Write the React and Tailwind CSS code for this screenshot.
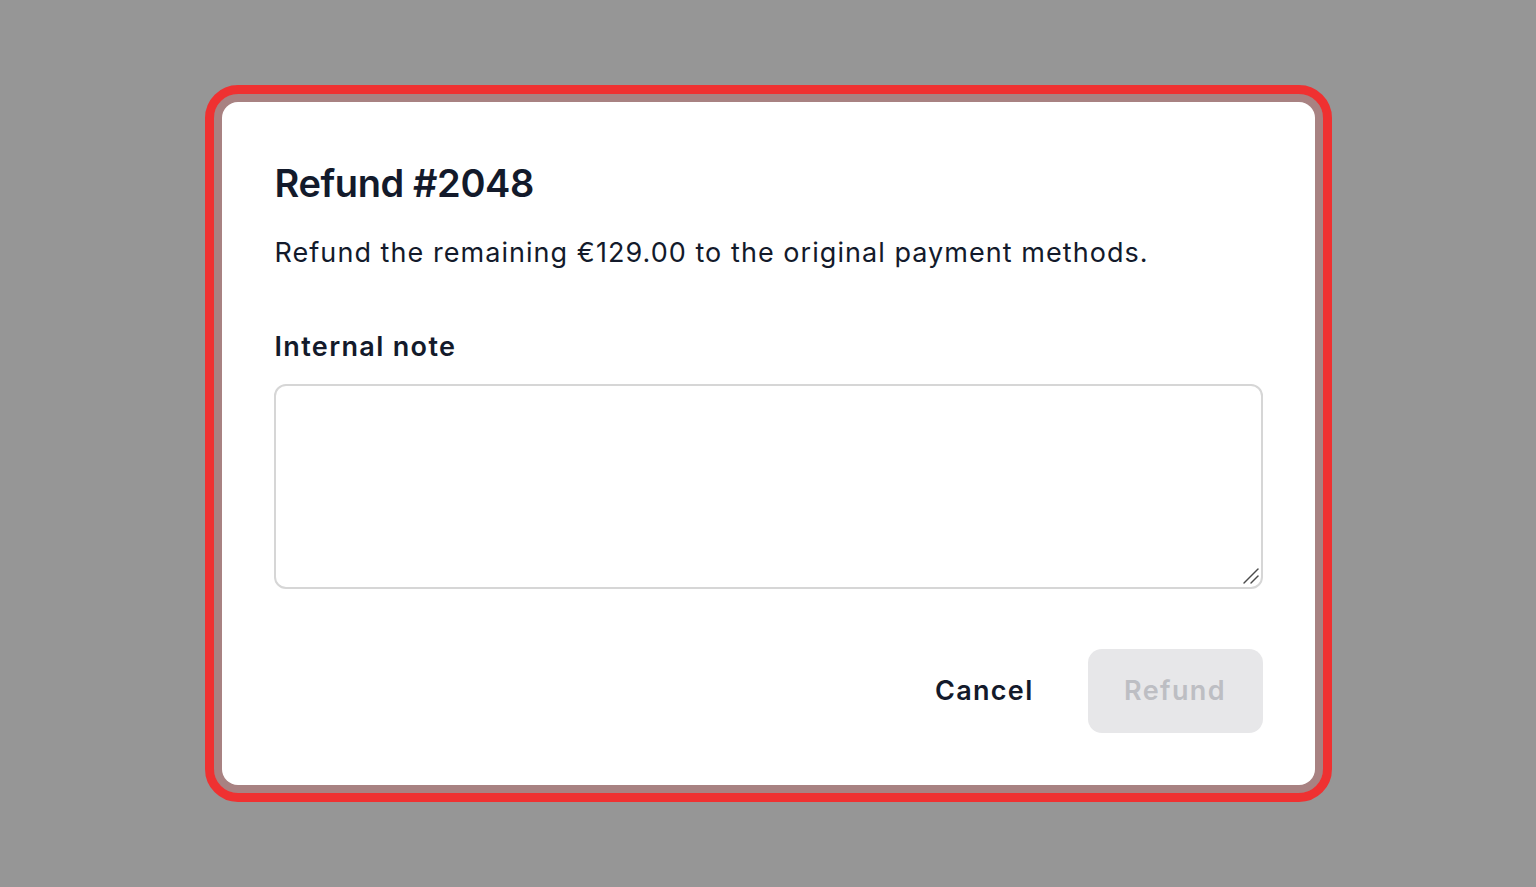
export default function App() {
  return (
    <div
      className="h-[887px] w-full flex items-center justify-center bg-[#969696]"
      style={{ fontFamily: 'Inter, "Noto Sans", sans-serif' }}
    >
      <div className="w-[1093px] bg-white rounded-2xl pl-[52px] pr-[52px] pt-[58px] pb-[52px] ring-8 ring-[#ee3232]/20 outline-[9px] outline-solid outline-offset-8 outline-[#ef3131]">
        <h2 className="pl-px text-[38px] leading-[46px] font-semibold tracking-[-0.4px] text-[#131a2b]">Refund #2048</h2>
        <p className="pl-px mt-[27px] text-[27px] leading-[40px] tracking-[1.05px] text-[#131a2b]">
          Refund the remaining €129.00 to the original payment methods.
        </p>
        <label className="pl-px block mt-[54px] text-[27px] leading-[40px] font-semibold tracking-[1.35px] text-[#131a2b]">
          Internal note
        </label>
        <div className="relative mt-[17px]">
          <textarea className="block w-full h-[205px] resize-none border-2 border-[#d6d6d6] rounded-xl p-4 text-[27px] text-[#131a2b] outline-none" />
          <svg
            className="absolute right-[3px] bottom-[4px] w-[18px] h-[18px] pointer-events-none"
            viewBox="0 0 18 18"
            fill="none"
            stroke="#4b4b4b"
            strokeWidth="1.4"
            strokeLinecap="round"
          >
            <path d="M2 16 L16 2" />
            <path d="M9 16 L16 9" />
          </svg>
        </div>
        <div className="mt-[60px] flex justify-end items-center gap-[26px]">
          <button className="h-[84px] px-[28px] rounded-xl text-[27px] font-semibold tracking-[1.3px] text-[#131a2b]">
            Cancel
          </button>
          <button
            disabled
            className="h-[84px] w-[175px] rounded-[14px] bg-[#e7e7e9] text-[27px] font-semibold tracking-[1.4px] text-[#bdbec3]"
          >
            Refund
          </button>
        </div>
      </div>
    </div>
  );
}
